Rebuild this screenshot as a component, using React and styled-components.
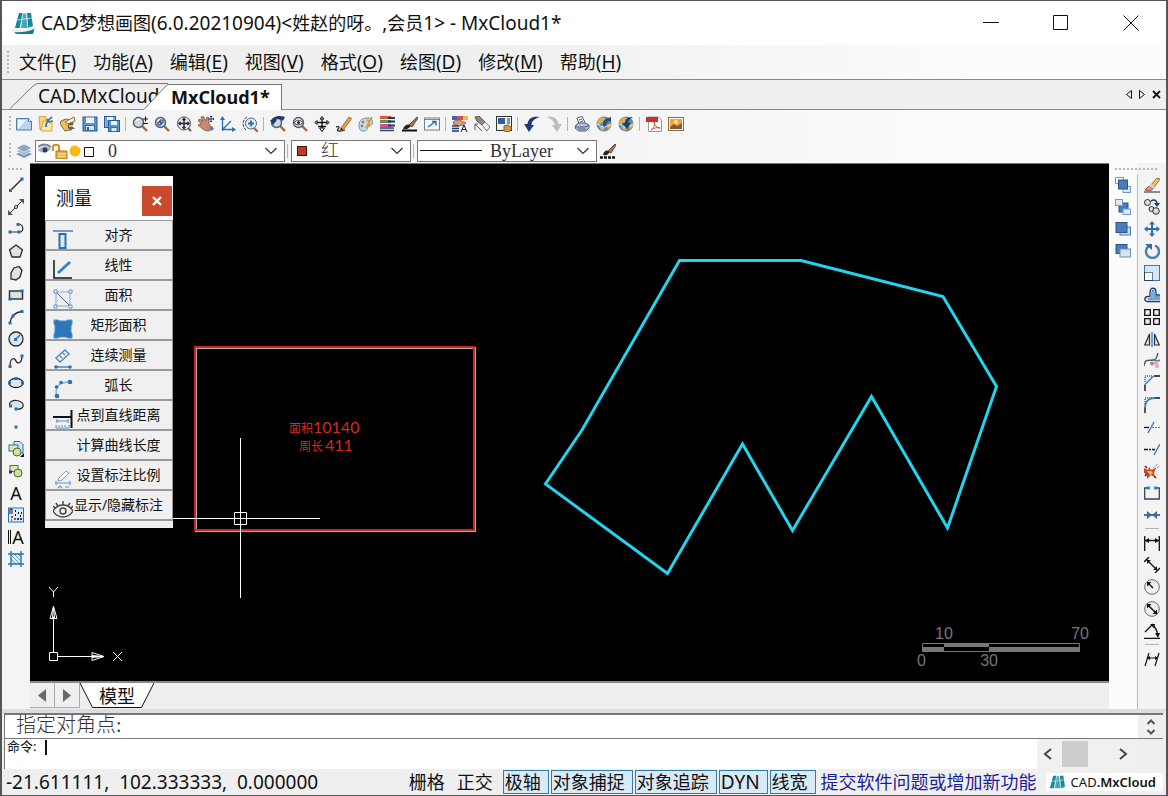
import React, { useState } from "react";
import styled, { createGlobalStyle, css } from "styled-components";

const menus = [
  ["文件", "F"],
  ["功能", "A"],
  ["编辑", "E"],
  ["视图", "V"],
  ["格式", "O"],
  ["绘图", "D"],
  ["修改", "M"],
  ["帮助", "H"],
];

const mainTools = [
  "new", "open", "openCloud", "save", "saveAll", "|",
  "zoomScale", "zoomWindow", "zoomExtents", "pan", "ucs", "zoomIn", "|",
  "zoomPrev", "zoomEye", "anchor", "pencil", "palette", "layers", "brush", "window", "|",
  "textStyle", "match", "properties", "|",
  "undo", "redo", "|",
  "print", "web", "webBack", "|",
  "pdf", "image",
];

const drawTools = [
  "line", "xline", "pline", "pentagon", "polygon", "rect", "arc", "circle", "spline",
  "ellipse", "ellipseArc", "point", "insertBlock", "block", "text", "pattern", "mtext", "hatch",
];

const orderTools = ["orderFront", "orderMiddle", "orderAbove", "orderBelow"];

const modifyTools = [
  "erase", "copy", "move", "rotate", "scale", "offset", "array", "mirror", "splineEdit",
  "chamfer", "fillet", "trim", "extend", "explode", "break", "join", "|",
  "dimLinear", "dimAligned", "dimRadius", "dimDiameter", "dimAngle", "|", "dimEdit",
];

const measures = [
  ["mAlign", "对齐"],
  ["mLinear", "线性"],
  ["mArea", "面积"],
  ["mRectArea", "矩形面积"],
  ["mContinue", "连续测量"],
  ["mArc", "弧长"],
  ["mPoint", "点到直线距离"],
  [null, "计算曲线长度"],
  ["mScale", "设置标注比例"],
  ["mEye", "显示/隐藏标注"],
];

const modes = [
  ["栅格", false],
  ["正交", false],
  ["极轴", true],
  ["对象捕捉", true],
  ["对象追踪", true],
  ["DYN", true],
  ["线宽", true],
];

const blue = "#2a6fb0";
const navy = "#1d3c74";
const ink = "#2b2b2b";

const dots = (points, fill = blue) =>
  points.map(([x, y]) => <rect key={`${x}-${y}`} x={x - 1.5} y={y - 1.5} width="3" height="3" fill={fill} />);

const lens = (
  <>
    <path d="M10 10l5 5" stroke="#a8643c" strokeWidth="2.4" />
    <circle cx="6.5" cy="6.5" r="5" fill="#cfd8df" stroke="#4d5f6c" strokeWidth="1.4" />
    <path d="M4 5c1-2 3-2 4-1" stroke="#fff" strokeWidth="1.2" />
  </>
);

const globe = (
  <>
    <circle cx="8" cy="8" r="7.5" fill="#4f8db8" />
    <path d="M2 4l4-3 4 2-3 3-4 3-2-1zM3 11l4-1 2 3-3 2zM11 9l4-2v3l-3 4z" fill="#d9b04b" />
    <path d="M1 8c3 1 4 3 7 3s4-2 7-2" fill="none" stroke="#dcecf4" />
  </>
);

const icons = {
  new: (
    <>
      <path d="M.5 2.5h12l3 3v8.500h-15z" fill="#b9d4ee" stroke="#4c7db0" />
      <path d="M2 4h8l-7 8H2z" fill="#eef6fd" />
      <path d="M12.5 2.5v3h3" fill="#fff" stroke="#4c7db0" />
    </>
  ),
  open: (
    <>
      <path d="M1 .5h7v14l-6-1z" fill="#f6d37c" stroke="#d5a443" />
      <path d="M5 5h9v10H3z" fill="#fbe6a6" stroke="#d8aa4a" />
      <path d="M8 11c0-4 1-7 5-9l1-1M9 3l2 3 4-1" stroke="#3d79a8" strokeWidth="1.8" />
    </>
  ),
  openCloud: (
    <>
      <path d="M1 5l5-2 7 2-3 9-5 1-5-7z" fill="#f0bd59" stroke="#8e6c34" />
      <path d="M5 6l9-5 1 4-7 3z" fill="#fff3d1" stroke="#916b3a" />
      <path d="M14 7c-4-1-7 1-6 5l3 3 1-2h3l-3-3z" fill="#55616a" />
      <path d="M9 10h4" stroke="#fbd481" strokeWidth="1.5" />
    </>
  ),
  save: (
    <>
      <rect x="1" y="1" width="14" height="14" fill="#5a94cb" stroke="#2c5d94" />
      <rect x="4" y="1.5" width="8" height="5.5" fill="#eaf3fb" />
      <rect x="3.5" y="9.5" width="9" height="5" fill="#d9e8f5" stroke="#376da5" />
      <rect x="5" y="11" width="2" height="3" fill="#2b5e96" />
    </>
  ),
  saveAll: (
    <>
      <rect x=".5" y=".5" width="11" height="11" fill="#7aabd6" stroke="#2c5d94" />
      <rect x="3" y="1" width="6" height="3" fill="#eaf3fb" />
      <rect x="4.5" y="4.5" width="11" height="11" fill="#5a94cb" stroke="#2c5d94" />
      <rect x="7" y="5" width="6" height="4" fill="#eaf3fb" />
      <rect x="7" y="11.5" width="6" height="4" fill="#d9e8f5" stroke="#376da5" />
    </>
  ),
  zoomScale: (
    <>
      {lens}
      <path d="M11 3h5M13.5 .5v5M11 7.5h5" stroke="#111" />
    </>
  ),
  zoomWindow: (
    <>
      {lens}
      <path d="M4 6h3v3H4zM6 4h3v3H6z" fill="#b8dbf5" stroke={navy} />
    </>
  ),
  zoomExtents: (
    <>
      <path d="M11 11l4 4" stroke="#81512f" strokeWidth="2" />
      <circle cx="8" cy="7.5" r="6.5" fill="#e4e9ed" stroke="#43515e" />
      <path
        d="M8 2.5v10M3 7.500h10M6.500 4L8 2.500 9.500 4M6.500 11L8 12.500 9.500 11M4.500 6L3 7.500 4.500 9M11.500 6L13 7.500 11.500 9"
        stroke="#222"
        strokeWidth="1.3"
      />
    </>
  ),
  pan: (
    <>
      <path d="M0 4l2-1 3 3-2-5 2-1 3 5 1-4 2 1v6l3 4-3 3-5-1-6-5 3-1z" fill="#c98b70" stroke="#80503f" strokeWidth=".8" />
      <path d="M11 12l3-2 2 3-3 2z" fill="#517bb4" />
      <path d="M13 0v6M10 3h6M12 1l1-1 1 1M12 5l1 1 1-1M15 2l1 1-1 1" stroke={navy} />
    </>
  ),
  ucs: (
    <>
      <path d="M2.5 15V2M2.5 13.5H15M2.5 13.5L11 5" stroke={blue} strokeWidth="1.3" />
      <path d="M0 4l2.500-4L5 4zM12 11l4 2.500-4 2.500z" fill={blue} />
    </>
  ),
  zoomIn: (
    <>
      <path d="M12 12l4 4" stroke="#b06939" strokeWidth="2.4" />
      <path d="M5 1a8 8 0 0 0-1 13" stroke="#335" strokeDasharray="3 1" />
      <circle cx="9" cy="7.5" r="5.5" fill="#dcecf8" stroke="#486a86" />
      <path d="M9 4.5v6M6 7.500h6" stroke={blue} strokeWidth="1.8" />
    </>
  ),
  zoomPrev: (
    <>
      {lens}
      <path d="M4 7c0-4 6-5 9-2l2-4C10-1 3 0 1 5z" fill={navy} />
      <path d="M0 4h7l-4 5z" fill={navy} />
    </>
  ),
  zoomEye: (
    <>
      {lens}
      <path d="M2.5 6.500c2-3 6-3 8 0-2 3-6 3-8 0z" fill="#fff" stroke="#333" />
      <circle cx="6.5" cy="6.5" r="1.5" fill="#222" />
    </>
  ),
  anchor: (
    <>
      <path d="M8 1v14M1 6.500h14M4 10.500h8" stroke="#111" strokeWidth="1.300" />
      <path d="M8 .5L6 3h4zM8 15.500L5.500 12h5zM1 6.500l2-2v4zM15 6.500l-2-2v4z" stroke="#111" fill="#fff" />
    </>
  ),
  pencil: (
    <>
      <path d="M0 11c3-1 4 0 2 2s2 3 7 1" stroke="#34231b" strokeWidth="1.300" />
      <path d="M5 12l8-11 2.500 1.500L8 13l-3 1z" fill="#eaa04b" stroke="#9a5323" strokeWidth=".8" />
      <path d="M5 11.500L4 15l3-1.500z" fill="#34231b" />
    </>
  ),
  palette: (
    <>
      <path d="M1 9c0-5 4-7 9-7 4 0 5 3 4 6-1 2-3 1-4 3s-1 4-5 4c-3 0-4-3-4-6z" fill="#c7dced" stroke="#678eb0" />
      <circle cx="5" cy="6" r="1.3" fill="#db4e43" />
      <circle cx="9" cy="4.5" r="1.3" fill="#f0b43d" />
      <circle cx="4" cy="10" r="1.3" fill="#4b9b52" />
      <path d="M8 12l6-11M11 11V4" stroke="#e39535" strokeWidth="1.6" />
    </>
  ),
  layers: (
    <>
      <rect x="0" y="0" width="11" height="3" fill="#e7523f" />
      <rect x="0" y="4" width="11" height="3" fill="#4b9c51" />
      <rect x="0" y="8" width="11" height="3" fill="#d948a1" />
      <path d="M0 12h14M0 14.500h14" stroke="#30465f" strokeWidth="1.4" />
      <path d="M8 2h7M8 5.500h7M8 9.500h7" stroke="#243a66" strokeWidth="1.8" />
    </>
  ),
  brush: (
    <>
      <path d="M0 14.500h15" stroke="#111" strokeWidth="2" />
      <path d="M1 13c2-5 5-5 8-4-1 3-4 5-8 4z" fill="#222" />
      <path d="M7 9l8-8 1 1-6 9z" fill="#a37656" stroke="#4b3123" strokeWidth=".8" />
    </>
  ),
  brushLine: (
    <>
      <path d="M0 14.500h16" stroke="#111" strokeWidth="2.400" strokeDasharray="3 1" />
      <path d="M3 12c1-5 4-5 7-4-1 3-3 5-7 4z" fill="#222" />
      <path d="M8 8l7-7 1 1-5 8z" fill="#a37656" stroke="#4b3123" strokeWidth=".8" />
    </>
  ),
  window: (
    <>
      <rect x=".5" y="2" width="15" height="12" fill="#f5f9fc" stroke="#6d8193" />
      <path d="M1 3.500h14" stroke="#6b8fb0" />
      <path d="M4 11l7-5M8 5.500h4v4" stroke={blue} strokeWidth="1.4" />
    </>
  ),
  textStyle: (
    <>
      <path d="M0 0h5v4H0z" fill="#3c66b5" />
      <path d="M5 0h6v4H5z" fill="#e0493c" />
      <path d="M11 0h5v4h-5z" fill="#f1b63a" />
      <path d="M2 5l5-1 7 3-3 2-4 1-6-2z" fill="#d69a79" stroke="#7a4c38" strokeWidth=".7" />
      <path d="M0 10h7M0 12.500h7M0 15h7" stroke="#243a66" strokeWidth="1.3" />
      <path d="M9 16l3-7 3 7M10 13.500h4" stroke="#222" />
    </>
  ),
  match: (
    <>
      <path d="M1 1l4-1 6 6-3 3-5-4z" fill="#9a8476" stroke="#555" />
      <path d="M8 9l3-3 5 5-3 4z" fill="#eceff2" stroke="#778" />
      <path d="M1 14V8M1 8l7 7M1 8h3" stroke="#4d6174" />
    </>
  ),
  properties: (
    <>
      <rect x=".5" y=".5" width="15" height="14" fill="#eef3f8" stroke="#333" />
      <rect x="2" y="2" width="7" height="6" fill="#2f5f97" />
      <path d="M11 3h3M11 5h3M11 7h3" stroke="#333" />
      <path d="M8 10l4-1 4 3-3 4-5-1z" fill="#dd9645" stroke="#8f5826" />
    </>
  ),
  undo: <path d="M15.5 1c-7-1-11 1-12 7H0l5 8 5-7H7.500c0-4 3-6 8-8z" fill={navy} />,
  redo: <path d="M.5 1c7-1 11 1 12 7H16l-5 8-5-7h2.500c0-4-3-6-8-8z" fill="#bdbdbd" />,
  print: (
    <>
      <path d="M5 8L3 2l5-1.500 3 6" fill="#fff" stroke="#485b78" />
      <path d="M5 4l3-1M6 6l3-1" stroke="#485b78" />
      <path d="M2 9l3-2h6l4 2v3l-3 3H5l-4-3z" fill="#b9c6da" stroke="#485b78" />
      <path d="M2 11h9l3-1M4 13h8" stroke="#485b78" />
    </>
  ),
  web: (
    <>
      {globe}
      <path d="M7 8c0-4 3-6 8-7v5l-2-1c-3 1-2 5-5 6z" fill="#314d73" />
    </>
  ),
  webBack: (
    <>
      {globe}
      <path d="M15 1c-5 0-8 2-8 6H4l5 6 4-6h-3c0-3 2-4 5-6z" fill={navy} />
    </>
  ),
  pdf: (
    <>
      <path d="M2.5 1h10l3 3v11.500h-13z" fill="#fff" stroke="#999" />
      <rect x="0" y="1" width="12" height="5" fill="#c92f2b" />
      <path d="M5 14c3-2 4-5 3-8 1 4 3 6 6 6-3-1-6 0-9 2z" stroke="#d44b40" />
    </>
  ),
  image: (
    <>
      <rect x=".5" y="1.5" width="15" height="13" fill="#fff" stroke="#8a6a4d" />
      <rect x="2" y="3" width="12" height="10" fill="#f0a63f" />
      <path d="M2 11l4-3 3 2 5-3v6H2z" fill="#8b5a3b" />
      <circle cx="8" cy="6" r="2" fill="#fbe57c" />
    </>
  ),
  stack: (
    <>
      <path d="M0 11l8-3 8 3-8 4z" fill="#7795b5" />
      <path d="M0 8l8-3 8 3-8 4z" fill="#9db7d0" stroke="#fff" strokeWidth=".6" />
      <path d="M0 5l8-4 8 4-8 4z" fill="#87a5c2" stroke="#fff" strokeWidth=".6" />
    </>
  ),
  line: (
    <>
      <path d="M2.5 13.500l11-11" stroke={ink} strokeWidth="1.4" />
      {dots([[2.5, 13.5], [14, 2]])}
    </>
  ),
  xline: (
    <>
      <path d="M1 15L15 1" stroke={ink} />
      <path d="M0 16v-5l5 5zM16 0v5l-5-5z" fill="#555" />
      <circle cx="8" cy="8" r="1.5" fill="#fff" stroke={ink} />
    </>
  ),
  pline: (
    <>
      <path d="M2 11h10M10 3c6 0 6 8 2 8" stroke={ink} strokeWidth="1.2" />
      {dots([[2, 11], [11, 11], [10, 3.5]])}
    </>
  ),
  pentagon: <path d="M8 2l6.500 5-2.500 7H4L1.500 7z" fill="#dde2e6" stroke={ink} strokeWidth="1.3" />,
  polygon: <path d="M6 3l5-1.500 3 4-2 6.500-4 3-5-1 0-6z" fill="#dfe3e6" stroke={ink} strokeWidth="1.3" />,
  rect: (
    <>
      <rect x="1.5" y="4" width="13" height="8" fill="#dde2e6" stroke={ink} strokeWidth="1.4" />
      {dots([[2, 12], [14, 4]])}
    </>
  ),
  arc: (
    <>
      <path d="M2 14C3 8 7 3 14 2.500" stroke={ink} strokeWidth="1.3" />
      {dots([[2, 14], [14, 2.5], [5, 7]])}
    </>
  ),
  circle: (
    <>
      <circle cx="8" cy="8" r="7" fill="#dce7ef" stroke={ink} strokeWidth="1.3" />
      <path d="M8 8l4-4" stroke={blue} strokeWidth="1.5" />
      {dots([[7.5, 8.5]])}
    </>
  ),
  spline: (
    <>
      <path d="M2 14C2 3 7 5 8 8s6 3 6-5" stroke={ink} strokeWidth="1.3" />
      {dots([[2, 13.5], [14, 3]])}
    </>
  ),
  ellipse: (
    <>
      <ellipse cx="8" cy="8" rx="7" ry="4.5" fill="#dce7ef" stroke={ink} strokeWidth="1.3" />
      {dots([[1.5, 8], [14.5, 8], [8, 3.5]])}
    </>
  ),
  ellipseArc: (
    <>
      <path d="M2 9C0 5 5 3 9 3.500s7 3 6 6-4 3-7 2.500" fill="#dce3e8" stroke={ink} strokeWidth="1.2" />
      {dots([[2.5, 9], [8, 12]])}
    </>
  ),
  point: dots([[8, 8]]),
  insertBlock: (
    <>
      <path d="M6 .5h6l3 3V12H6z" fill="#d4e5f5" stroke={blue} />
      <rect x="1" y="4" width="9" height="6" fill="#e9e9a5" stroke={blue} />
      <circle cx="9" cy="11" r="4" fill="#d4e08c" stroke="#3b6b50" />
      <path d="M16 12v4h-4z" fill="#111" />
    </>
  ),
  block: (
    <>
      <rect x="2" y="2.5" width="8" height="6" fill="#e9e9a5" stroke={blue} />
      <circle cx="10" cy="10" r="4" fill="#d4e08c" stroke="#3b6b50" />
      {dots([[2.5, 9]], navy)}
    </>
  ),
  pattern: (
    <>
      <rect x=".5" y="1" width="15" height="14" fill="#dcebf8" stroke={blue} />
      <path d="M7 4h1M10 6h1M13 6h1M7 8h1M12 9h1" stroke="#111" strokeWidth="2" />
      <path d="M3 10h2M6 12h2M3 13h1" stroke="#d63a31" strokeWidth="2" />
      <path d="M9 12h2M12 12h2" stroke={navy} strokeWidth="2" />
      <path d="M2 7V2h2v5" stroke="#111" />
    </>
  ),
  hatch: (
    <>
      <rect x="3" y="3" width="10" height="10" fill="#e8f1f8" />
      <path d="M3 8l5 5M3 4l9 9M6 3l7 7M10 3l3 3" stroke="#6b9bc4" />
      <path d="M3 0v16M13 0v16M0 3h16M0 13h16" stroke={blue} strokeWidth="1.4" />
    </>
  ),
  orderFront: (
    <>
      <rect x=".5" y=".5" width="8" height="6" fill="#fff" stroke="#6f9cc9" />
      <rect x="8" y="9.5" width="7.5" height="6" fill="#dceaf6" stroke="#6f9cc9" />
      <rect x="3.5" y="3" width="9" height="9" fill="#4a7cb8" stroke="#285590" />
    </>
  ),
  orderMiddle: (
    <>
      <rect x="4" y="4" width="9" height="9" fill="#4a7cb8" stroke="#285590" />
      <rect x=".5" y=".5" width="7" height="6" fill="#dceaf6" stroke="#6f9cc9" />
      <rect x="8" y="10" width="7.5" height="5.5" fill="#dceaf6" stroke="#6f9cc9" />
    </>
  ),
  orderAbove: (
    <>
      <rect x="5" y="6" width="10.5" height="8" fill="#c9def1" stroke="#4777ab" />
      <rect x="1" y="1.5" width="11" height="10" fill="#4a7cb8" stroke="#285590" />
    </>
  ),
  orderBelow: (
    <>
      <rect x="1" y="1.5" width="11" height="9" fill="#4a7cb8" stroke="#285590" />
      <rect x="5" y="6" width="10.5" height="8" fill="#d6e4f0" stroke="#6c8fb3" />
    </>
  ),
  erase: (
    <>
      <path d="M0 15h16" stroke="#222" />
      <path d="M6 9l7-8 3 1-7 10z" fill="#efc463" stroke="#7a5831" strokeWidth=".8" />
      <path d="M1 13l4-4 4 3-3 2z" fill="#ee8f7a" stroke="#7b4033" strokeWidth=".8" />
      <path d="M5 9l2-2 4 3-2 2z" fill="#c1d2e3" />
    </>
  ),
  copy: (
    <>
      <circle cx="3.5" cy="3.5" r="3" fill="#ddd" stroke={ink} />
      <circle cx="7.5" cy="10" r="2.5" fill="#ddd" stroke={ink} />
      <circle cx="12" cy="12" r="3.3" fill="#ddd" stroke={ink} />
      <path d="M7 2c3-2 6-1 6 3" stroke={navy} strokeWidth="1.6" />
      <path d="M10 4h6l-3 4z" fill={navy} />
    </>
  ),
  move: (
    <>
      <path d="M8 2v12M2 8h12" stroke={blue} strokeWidth="2" />
      <path
        d="M5 3.500L8 0l3 3.500zM5 12.500L8 16l3-3.500zM3.500 5L0 8l3.500 3zM12.500 5L16 8l-3.500 3z"
        fill={blue}
      />
    </>
  ),
  rotate: (
    <>
      <path d="M6 2.500A6.500 6.500 0 1 0 11 2.500" stroke="#4b7fae" strokeWidth="2.4" />
      <path d="M1 1h7v6z" fill="#3c6b98" />
    </>
  ),
  scale: (
    <>
      <rect x=".5" y=".5" width="15" height="15" fill="#d4e7f7" stroke="#3f74aa" />
      <rect x="1" y="8" width="7" height="7" fill="#f5faff" />
      <path d="M.5 7.500h8v8h-8z" stroke="#111" strokeDasharray="1 1" />
    </>
  ),
  offset: (
    <>
      <path d="M16 14.500H3c-3 0-3-5 1-5h2V5c0-5 6-5 6 0v3h4" stroke={navy} strokeWidth="1.3" />
      <path d="M16 12H4M8 12V5c0-2 2-2 2 0v5h6" stroke="#4189cd" strokeWidth="1.3" />
    </>
  ),
  array: (
    <path
      d="M.7.700h5.600v5.600H.7zM9.700.700h5.600v5.600H9.700zM.7 9.700h5.600v5.600H.7zM9.700 9.700h5.600v5.600H9.700z"
      fill="#eee"
      stroke="#111"
      strokeWidth="1.3"
    />
  ),
  mirror: (
    <>
      <path d="M5.5 3v11H.8zM10.500 3v11h4.700z" fill="#e5e5e5" stroke={ink} strokeWidth="1.2" />
      <path d="M8 1v15" stroke="#3c8ad4" strokeWidth="1.5" />
    </>
  ),
  splineEdit: (
    <>
      <path d="M0 13c1-8 5-5 9-6 4 0 4-4 5-7" stroke="#555" strokeWidth="1.4" />
      <path d="M9 7l5 1 2-1" stroke="#4b7fc4" strokeWidth="1.6" />
      <circle cx="8" cy="10.500" r="2" fill="#a879cc" />
      <circle cx="12" cy="10" r="2" fill="#e3b84b" />
      <circle cx="13" cy="13" r="2.2" fill="#e6aad0" />
    </>
  ),
  chamfer: (
    <>
      <path d="M1 7V1h8" stroke="#111" strokeDasharray="1 1" />
      <path d="M1 16V9.500M10 1h6" stroke="#111" strokeWidth="1.4" />
      <path d="M1 9.500L9.500 1" stroke="#3a7fc5" strokeWidth="1.4" />
    </>
  ),
  fillet: (
    <>
      <path d="M1 7V1h7" stroke="#111" strokeDasharray="1 1" />
      <path d="M1 16v-6M10 1h6" stroke="#111" strokeWidth="1.4" />
      <path d="M1 11C1 5 4 1 11 1" stroke="#3a7fc5" strokeWidth="1.8" />
    </>
  ),
  trim: (
    <>
      <path d="M0 8.500h5" stroke="#111" strokeWidth="1.3" />
      <path d="M8 8.500h8" stroke="#3a7fc5" strokeWidth="1.2" strokeDasharray="2 1" />
      <path d="M4 14l6-11" stroke="#3a7fc5" strokeWidth="1.5" />
    </>
  ),
  extend: (
    <>
      <path d="M0 8.500h4M5 8.500h2M8 8.500h3" stroke="#111" strokeWidth="1.3" />
      <path d="M10 14l6-11" stroke="#3a7fc5" strokeWidth="1.5" />
    </>
  ),
  explode: (
    <>
      <path d="M0 5l4 2 1-3 2 3 5-2-2 5 1 4-4-2-4 4 0-4-3-2z" fill="#c5472a" />
      <path d="M3 8l4 0 2 2-3 2z" fill="#f7c948" />
      <path d="M1 13l2-2M10 13l2 2M1 3l2 2" stroke="#6b241a" strokeWidth="1.6" />
      <path d="M9 5l5-4M11 6l5-3" stroke="#555" strokeDasharray="1 1" />
    </>
  ),
  break: (
    <>
      <path d="M3 3H.7v11h14.600V3H13" stroke="#37485c" strokeWidth="1.3" fill="#f2f5f7" />
      {dots([[4.5, 3], [11.5, 3]], "#2389cb")}
    </>
  ),
  join: (
    <>
      <path d="M0 8h16" stroke={navy} strokeWidth="1.5" />
      <path d="M3 4l5 4-5 4zM13 4L8 8l5 4z" fill="#3f6d9c" />
    </>
  ),
  dimLinear: (
    <>
      <path d="M.7 1v15M15.300 1v15M1 5.500h14" stroke="#111" strokeWidth="1.3" />
      <path d="M1 5.500l4-2.500v5zM15 5.500L11 3v5z" fill="#111" />
    </>
  ),
  dimAligned: (
    <>
      <path d="M0 5l5-5M11 16l5-5M3 3l10 10" stroke="#111" strokeWidth="1.4" />
      <path d="M3 3h4L3 7zM13 13H9l4-4z" fill="#111" />
    </>
  ),
  dimRadius: (
    <>
      <circle cx="8" cy="8" r="7.3" fill="#f1f1f1" stroke="#666" />
      <path d="M3.500 3.500L9 9" stroke="#111" strokeWidth="1.5" />
      <path d="M3 3h4.500L3 7.500z" fill="#111" />
    </>
  ),
  dimDiameter: (
    <>
      <circle cx="8" cy="8" r="7.3" fill="#f1f1f1" stroke="#666" />
      <path d="M3 3l10 10" stroke="#111" strokeWidth="1.5" />
      <path d="M3 3h4.500L3 7.500zM13 13H8.500L13 8.500z" fill="#111" />
    </>
  ),
  dimAngle: (
    <>
      <path d="M0 15.500h16M1 9l8-8M7 2c4 1 6 4 7 11" stroke="#111" strokeWidth="1.3" />
      <path d="M11 10h5l-2 5zM6 1h5l-1 4z" fill="#111" />
    </>
  ),
  dimEdit: (
    <>
      <path d="M1 15L5 2M11 15l4-13M4 7h9" stroke="#111" strokeWidth="1.2" />
      <path d="M3 7l3-2v4zM14 7l-3-2v4z" fill="#111" />
    </>
  ),
  mAlign: (
    <>
      <path d="M0 2h20" stroke="#6e9ac8" strokeWidth="2" />
      <rect x="6.5" y="5" width="6" height="14" fill="#dceaf6" stroke="#2473b8" strokeWidth="2" />
    </>
  ),
  mLinear: (
    <>
      <path d="M1 1v18h18" stroke="#111" strokeWidth="1.5" />
      <path d="M5 14L17 3" stroke="#3a82c8" strokeWidth="3" />
    </>
  ),
  mArea: (
    <>
      <path d="M3 3h14v14H3z" stroke="#86acd0" />
      <path d="M3 3l14 14" stroke="#556c86" />
      <path d="M1 1h3v3H1zM16 1h3v3h-3zM1 16h3v3H1zM16 16h3v3h-3z" stroke="#5d8fc0" fill="#fff" />
    </>
  ),
  mRectArea: (
    <path
      d="M1 1h4l2 1h6l2-1h4v4l-1 2v6l1 2v4h-4l-2-1H7l-2 1H1v-4l1-2V7L1 5z"
      fill="#2d76b8"
      stroke="#4d94d1"
    />
  ),
  mContinue: (
    <>
      <path d="M3 9l9-8 4 4-9 8z" stroke="#4b87bf" fill="#eff5fa" strokeWidth="1.4" />
      <path d="M7 7l2 2M10 4l2 2M3 18h14" stroke="#4b87bf" strokeWidth="1.5" />
      <circle cx="3" cy="18" r="1.8" fill={blue} />
      <circle cx="17" cy="18" r="1.8" fill={blue} />
    </>
  ),
  mArc: (
    <>
      <path d="M4 17C1 9 6 3 16 3" stroke="#8db1d3" strokeWidth="1.5" />
      <circle cx="4" cy="17" r="2.3" fill="#2473b8" />
      <circle cx="3.5" cy="8" r="1.8" fill="#2473b8" />
      <circle cx="8" cy="3.5" r="1.8" fill="#2473b8" />
      <circle cx="17" cy="3" r="2.3" fill="#2473b8" />
    </>
  ),
  mPoint: (
    <>
      <path d="M0 8h18M18.500 1v18" stroke="#111" strokeWidth="2" />
      <path d="M3 12h13M3 16v3h13v-3M6 16v2M9 16v2M12 16v2M4 10v4M15 10v4" stroke="#5b90c5" />
    </>
  ),
  mScale: (
    <>
      <path d="M6 9l7-7 3 2-7 7-4 1z" stroke="#7d9cba" fill="#fff" />
      <path d="M3 14h14M3 12v4M17 12v4M5 19l2-2 2 2M12 18h4" stroke="#6695c4" strokeWidth="1.2" />
    </>
  ),
  mEye: (
    <>
      <path d="M0 12c5-8 15-8 20 0-5 8-15 8-20 0z" stroke="#444" strokeWidth="1.4" />
      <circle cx="10" cy="12" r="3" stroke="#444" strokeWidth="1.4" />
      <path d="M10 6V2M5 7L3 4M15 7l2-3M2 9L0 7M18 9l2-2" stroke="#444" strokeWidth="1.4" />
    </>
  ),
};

const Icon = ({ name, size = 16 }) => (
  <svg width={size} height={size} viewBox={`0 0 ${size} ${size}`} fill="none" aria-hidden="true">
    {icons[name]}
  </svg>
);

const Logo = ({ size, hull }) => (
  <svg width={size} height={size} viewBox={hull ? "0 0 24 24" : "2 1 19 17"} aria-hidden="true">
    <path d="M7 2h4L8 17H3zM15 2h4l2 13-5 2z" fill="#178a99" />
    <path d="M11 3l3-1 2 15H9z" fill="#45a9b4" />
    <path d="M5 9l15-2M11 2L8 17M14 2l2 15" stroke="#d8eef0" strokeWidth=".7" />
    {hull && <path d="M1 20c8 1 16 0 22-4l-2 7H4z" fill="#147a90" />}
    {hull && <path d="M0 18c9 1 17 0 24-3v2c-7 4-16 5-24 4z" fill="#e3f3f4" />}
  </svg>
);

const Tools = ({ names }) =>
  names.map((name, i) => {
    if (name === "|") return <Separator key={i} />;
    return (
      <ToolButton key={i} type="button" aria-label={name}>
        {name === "text" && <Letter>A</Letter>}
        {name === "mtext" && <Letter $bars>A</Letter>}
        {icons[name] && <Icon name={name} />}
      </ToolButton>
    );
  });

const Chevron = () => (
  <svg width="12" height="8" viewBox="0 0 12 8" fill="none" aria-hidden="true">
    <path d="M.5 1L6 6.500 11.500 1" stroke="#333" strokeWidth="1.2" />
  </svg>
);

const TabEdge = ({ active }) => {
  const slope = active ? "M0 25.500L20 4q3-3.500 4-3.500" : "M0 25.500L23 3q3-2.500 5-2.500";
  return (
    <svg width={active ? 24 : 28} height="26" aria-hidden="true">
      <path d={`${slope}V26H0`} fill={active ? "#fff" : "#efefef"} />
      <path d={slope} stroke="#777" fill="none" />
    </svg>
  );
};

function Drawing() {
  return (
    <DrawingSvg aria-label="绘图区">
      <g fill="none">
        <rect x="166" y="184" width="279" height="183" stroke="#b9a9a4" strokeWidth="2" />
        <rect x="165" y="183" width="279" height="183" stroke="#c4291f" strokeWidth="2" />
        <path
          d="M649.500 96.500H771L913 132.500 966.500 222.500 917.500 364 841.500 232.500 762.500 366.500 712.500 280 637.500 409.500 515.500 320 552 266z"
          stroke="#22d5ee"
          strokeWidth="3"
        />
        <path d="M130 354.500H290M210.500 274V434M204.500 348.500h12v12h-12z" stroke="#fff" />
      </g>
      <DrawingText x="259" y="269">
        <tspan>面积</tspan>
        <Digits>10140</Digits>
      </DrawingText>
      <DrawingText x="269" y="287">
        <tspan>周长</tspan>
        <Digits dx="2">411</Digits>
      </DrawingText>
    </DrawingSvg>
  );
}

function MeasurePanel() {
  const [open, setOpen] = useState(true);
  if (!open) return null;
  return (
    <Panel>
      <PanelHeader>
        <PanelTitle>测量</PanelTitle>
        <PanelClose type="button" aria-label="关闭" onClick={() => setOpen(false)}>
          <svg width="10" height="10" viewBox="0 0 10 10" aria-hidden="true">
            <path d="M1 1l8 8M9 1L1 9" stroke="#fff" strokeWidth="2.4" />
          </svg>
        </PanelClose>
      </PanelHeader>
      {measures.map(([icon, label]) => (
        <MeasureButton key={label} type="button">
          <MeasureIcon>{icon && <Icon name={icon} size={20} />}</MeasureIcon>
          <MeasureLabel>{label}</MeasureLabel>
        </MeasureButton>
      ))}
    </Panel>
  );
}

function App() {
  const [command, setCommand] = useState("");

  return (
    <>
      <GlobalStyle />
      <Window>
        <TitleBar>
          <Logo size={24} hull />
          <Title>
            CAD<Han>梦想画图</Han>(6.0.20210904)&lt;<Han>姓赵的呀。</Han>,<Han>会员</Han>1&gt; - MxCloud1*
          </Title>
          <WindowButton type="button" aria-label="最小化">
            <svg width="16" height="16"><path d="M0 7.500h16" stroke="#111" /></svg>
          </WindowButton>
          <WindowButton type="button" aria-label="最大化">
            <svg width="16" height="16"><path d="M.5.500h14v14H.5z" stroke="#111" fill="none" /></svg>
          </WindowButton>
          <WindowButton type="button" aria-label="关闭">
            <svg width="16" height="16"><path d="M.5.500l15 15M15.500.500l-15 15" stroke="#111" /></svg>
          </WindowButton>
        </TitleBar>

        <MenuBar>
          <Grip $length="22px" />
          {menus.map(([label, key]) => (
            <MenuItem key={key} type="button">
              <Han>{label}</Han>(<u>{key}</u>)
            </MenuItem>
          ))}
        </MenuBar>

        <DocTabs>
          <DocTab type="button">
            <TabEdge />
            <TabLabel $width="130px">CAD.MxCloud</TabLabel>
          </DocTab>
          <DocTab type="button" $active>
            <TabEdge active />
            <TabLabel $width="114px" $active>MxCloud1*</TabLabel>
          </DocTab>
          <TabArrows>
            <svg width="6" height="9"><path d="M5.500.500v8l-5-4z" fill="none" stroke="#111" /></svg>
            <svg width="6" height="9"><path d="M.5.500v8l5-4z" fill="none" stroke="#111" /></svg>
            <svg width="9" height="9"><path d="M1 1l7 7M8 1L1 8" stroke="#111" strokeWidth="1.8" /></svg>
          </TabArrows>
        </DocTabs>

        <ToolBar $height="28px">
          <Grip $length="16px" />
          <Tools names={mainTools} />
        </ToolBar>

        <ToolBar $height="25px">
          <Grip $length="16px" />
          <Tools names={["stack"]} />
          <Combo $width="250px">
            <svg width="60" height="16" viewBox="0 0 60 16" fill="none" aria-hidden="true">
              <path d="M0 7c4-5 10-5 13-1-3 4-10 5-13 1z" fill="#a9b5ca" />
              <path d="M0 4c4-3 9-3 13 0" stroke="#7b7f93" strokeWidth="2" />
              <circle cx="7" cy="7" r="2.5" fill="#2b3b5d" />
              <path d="M15 8V4c0-3 6-3 6 0v4" stroke="#d08a1f" strokeWidth="2" />
              <path d="M18 8h11v8H18z" fill="#e9b13d" stroke="#ad741c" />
              <path d="M20 11h8M20 13.500h8" stroke="#fbe6a0" />
              <circle cx="37" cy="8" r="5.5" fill="#fdb913" />
              <path d="M46.500 4.500h9v9h-9z" stroke="#111" fill="#fff" />
            </svg>
            <Select aria-label="图层" $indent="10px">
              <option>0</option>
            </Select>
            <Chevron />
          </Combo>
          <Separator />
          <Combo $width="120px">
            <Swatch />
            <Select aria-label="颜色" $indent="12px" $light>
              <option>红</option>
            </Select>
            <Chevron />
          </Combo>
          <Separator />
          <Combo $width="180px">
            <LineSample />
            <Select aria-label="线型" $indent="8px">
              <option>ByLayer</option>
            </Select>
            <Chevron />
          </Combo>
          <Tools names={["brushLine"]} />
        </ToolBar>

        <Workspace>
          <SideBar>
            <DotRow />
            <Tools names={drawTools} />
          </SideBar>
          <Center>
            <Canvas>
              <Drawing />
              <MeasurePanel />
              <UcsIcon viewBox="0 0 80 80" width="80" height="80" aria-label="UCS">
                <g stroke="#fff" fill="none">
                  <path d="M5.500 66.500v-36M9.500 70.500h46M1.500 66.500h8v8h-8z" />
                  <path d="M2 32.500l3.500-12 3.500 12zM4.500 32l1-12 1 12M44 66.500l12 4-12 4zM44 69.500l12 1-12 1" />
                  <path d="M1 1l4.500 5v5M10 1L5.500 6M65 66l9 9M74 66l-9 9" />
                </g>
              </UcsIcon>
              <ScaleBar>
                <ScaleRow>
                  <span>10</span>
                  <span>70</span>
                </ScaleRow>
                <svg width="158" height="9" aria-hidden="true">
                  <path d="M.5.500h157v8H.5z" fill="#000" stroke="#777" />
                  <path d="M0 4h22v5H0zM22 0h45v4H22zM67 4h91v5H67z" fill="#777" />
                </svg>
                <ScaleRow $below>
                  <span>0</span>
                  <span>30</span>
                </ScaleRow>
              </ScaleBar>
            </Canvas>
            <ModelTabs>
              <NavButton type="button" aria-label="上一个">
                <svg width="8" height="13"><path d="M8 0v13L0 6.500z" fill="#6a6a6a" /></svg>
              </NavButton>
              <NavButton type="button" aria-label="下一个">
                <svg width="8" height="13"><path d="M0 0v13l8-6.500z" fill="#6a6a6a" /></svg>
              </NavButton>
              <ModelTab type="button">
                <svg width="74" height="25" aria-hidden="true">
                  <path d="M0 0l12.500 24.500h49L74 0" fill="#fff" stroke="#111" />
                </svg>
                <span>模型</span>
              </ModelTab>
            </ModelTabs>
          </Center>
          <RightDock>
            <DotRow $wide />
            <RightColumns>
              <RightColumn>
                <Tools names={orderTools} />
              </RightColumn>
              <RightColumn $divided>
                <Tools names={modifyTools} />
              </RightColumn>
            </RightColumns>
          </RightDock>
        </Workspace>

        <CommandArea>
          <CommandOutput>
            <OutputText>指定对角点:</OutputText>
            <Spinner>
              <svg width="8" height="16" fill="none" aria-hidden="true">
                <path d="M.5 5L4 1.500 7.500 5M.5 11L4 14.500 7.500 11" stroke="#555" strokeWidth="2" />
              </svg>
            </Spinner>
          </CommandOutput>
          <CommandLine>
            <CommandLabel htmlFor="command">命令:</CommandLabel>
            <Caret />
            <CommandInput id="command" value={command} onChange={(e) => setCommand(e.target.value)} />
            <ScrollBar>
              <svg width="9" height="12" fill="none"><path d="M8 1L2 6l6 5" stroke="#444" strokeWidth="2" /></svg>
              <ScrollThumb />
              <svg width="9" height="12" fill="none"><path d="M1 1l6 5-6 5" stroke="#444" strokeWidth="2" /></svg>
            </ScrollBar>
            <Corner />
          </CommandLine>
        </CommandArea>

        <StatusBar>
          <Coordinates>-21.611111,&nbsp; 102.333333,&nbsp; 0.000000</Coordinates>
          {modes.map(([label, on]) => (
            <StatusButton key={label} type="button" $on={on} aria-pressed={on}>
              {label === "DYN" ? label : <Han>{label}</Han>}
            </StatusButton>
          ))}
          <Feedback href="#feedback">提交软件问题或增加新功能</Feedback>
          <Brand>
            <Logo size={16} />
            CAD<b>.MxCloud</b>
          </Brand>
        </StatusBar>
      </Window>
    </>
  );
}

const GlobalStyle = createGlobalStyle`
  * {
    box-sizing: border-box;
  }
  body {
    margin: 0;
    background: #efefef;
    color: #111;
    font-family: "Noto Sans", "Noto Sans CJK SC", sans-serif;
    font-size: 18px;
  }
  button, input, select {
    margin: 0;
    padding: 0;
    border: 0;
    border-radius: 0;
    background: none;
    color: inherit;
    font: inherit;
    outline: none;
  }
  svg {
    display: block;
    flex: none;
  }
`;

const Window = styled.div`
  display: flex;
  flex-direction: column;
  height: 100vh;
  min-height: 720px;
  border: 1px solid #555;
  border-width: 1px 2px;
  white-space: nowrap;
`;

// Chinese labels run one size smaller than the Latin text beside them
const Han = styled.span`
  font-size: 18px;
`;

const TitleBar = styled.header`
  display: flex;
  align-items: center;
  height: 44px;
  padding-left: 10px;
  background: #fff;
`;

const Title = styled.h1`
  flex: 1;
  margin: 0 0 0 5px;
  font-size: 19px;
  font-weight: 400;
  line-height: 24px;
`;

const WindowButton = styled.button`
  display: flex;
  align-items: center;
  justify-content: center;
  width: 70px;
  height: 44px;
`;

const MenuBar = styled.nav`
  display: flex;
  align-items: center;
  gap: 2px;
  height: 34px;
  padding-left: 5px;
  background: linear-gradient(90deg, #efefef 40%, #fcfcfc 85%);
`;

const Grip = styled.i`
  width: 2px;
  height: ${({ $length }) => $length};
  margin-right: 2px;
  background: repeating-linear-gradient(#b8b8b8 0 2px, transparent 2px 4px);
`;

const MenuItem = styled.button`
  padding: 0 8px 0 6px;
  font-size: 19px;
  line-height: 24px;
  u {
    text-underline-offset: 2px;
  }
  & + & {
    padding-left: 7px;
  }
`;

const DocTabs = styled.div`
  display: flex;
  align-items: flex-end;
  height: 31px;
  padding-left: 8px;
  border-top: 1px solid #888;
  border-bottom: 1px solid #888;
  background: #efefef;
`;

const DocTab = styled.button`
  display: flex;
  height: 26px;
  ${({ $active }) =>
    $active &&
    css`
      z-index: 1;
      margin-left: -24px;
      margin-bottom: -1px;
    `}
`;

const TabLabel = styled.span`
  width: ${({ $width }) => $width};
  height: 26px;
  overflow: hidden;
  border-top: 1px solid #777;
  font-size: 19px;
  line-height: 24px;
  text-align: left;
  ${({ $active }) =>
    $active &&
    css`
      padding-left: 3px;
      border-right: 1px solid #777;
      background: #fff;
      font-size: 18px;
      font-weight: 700;
    `}
`;

const TabArrows = styled.div`
  display: flex;
  gap: 7px;
  align-self: center;
  margin-left: auto;
  padding-right: 5px;
`;

const ToolBar = styled.div`
  display: flex;
  align-items: center;
  height: ${({ $height }) => $height};
  padding-left: 7px;
  background: linear-gradient(90deg, #f4f4f4 50%, #fcfcfc 85%);
`;

const Separator = styled.i`
  flex: none;
  align-self: center;
  width: 1px;
  height: 14px;
  margin: 0 3px 0 2px;
  background: #b5b5b5;
`;

const ToolButton = styled.button`
  display: flex;
  flex: none;
  align-items: center;
  justify-content: center;
  width: 22px;
  height: 22px;
  &:hover {
    background: #dbeaf7;
  }
`;

const Letter = styled.span`
  font-size: 18px;
  line-height: 18px;
  ${({ $bars }) =>
    $bars &&
    css`
      padding-left: 1px;
      border-left: 3px double #111;
      line-height: 14px;
    `}
`;

const Combo = styled.label`
  display: flex;
  align-items: center;
  width: ${({ $width }) => $width};
  height: 22px;
  padding: 0 7px 0 2px;
  border: 1px solid #777;
  background: #fff;
`;

const Select = styled.select`
  flex: 1;
  min-width: 0;
  height: 20px;
  padding-left: ${({ $indent }) => $indent};
  appearance: none;
  color: #333;
  font-family: "Liberation Serif", "Noto Sans CJK SC", serif;
  font-size: 18px;
  font-weight: ${({ $light }) => ($light ? 300 : 400)};
  line-height: 20px;
`;

const Swatch = styled.i`
  width: 10px;
  height: 10px;
  margin: 0 2px 0 3px;
  border: 1px solid #3c1712;
  background: #bf3a2b;
`;

const LineSample = styled.i`
  width: 62px;
  height: 1px;
  background: #111;
`;

const Workspace = styled.main`
  display: flex;
  flex: 1;
  min-height: 0;
  background: #f4f4f4;
`;

const SideBar = styled.aside`
  display: flex;
  flex-direction: column;
  align-items: center;
  width: 28px;
  padding-top: 5px;
`;

const DotRow = styled.i`
  width: ${({ $wide }) => ($wide ? "42px" : "16px")};
  height: 2px;
  margin: 0 0 4px ${({ $wide }) => ($wide ? "6px" : "0")};
  background: repeating-linear-gradient(90deg, #b8b8b8 0 2px, transparent 2px 4px);
`;

const Center = styled.div`
  display: flex;
  flex: 1;
  flex-direction: column;
  min-width: 0;
`;

const Canvas = styled.section`
  position: relative;
  flex: 1;
  overflow: hidden;
  border-top: 1px solid #777;
  background: #000;
`;

const DrawingSvg = styled.svg`
  position: absolute;
  inset: 0;
  width: 100%;
  height: 100%;
`;

const DrawingText = styled.text`
  fill: #d8281e;
  font-family: "Noto Sans CJK SC", sans-serif;
  font-size: 12px;
`;

const Digits = styled.tspan`
  font-family: Lato, sans-serif;
  font-size: 16px;
`;

const Panel = styled.div`
  position: absolute;
  top: 12px;
  left: 15px;
  display: flex;
  flex-direction: column;
  width: 128px;
  padding-bottom: 7px;
  background: #f0f0f0;
`;

const PanelHeader = styled.div`
  display: flex;
  align-items: center;
  justify-content: space-between;
  height: 45px;
  padding: 6px 1px 0 11px;
  border-bottom: 1px solid #999;
  background: #fff;
`;

const PanelTitle = styled.h2`
  margin: 0 0 6px;
  font-size: 18px;
  font-weight: 400;
  line-height: 24px;
`;

const PanelClose = styled.button`
  display: flex;
  align-items: center;
  justify-content: center;
  width: 30px;
  height: 30px;
  background: #c94a2c;
`;

const MeasureButton = styled.button`
  display: flex;
  align-items: center;
  height: 30px;
  padding: 0 8px 0 7px;
  border: solid #999;
  border-width: 0 1px 2px 1px;
  font-size: 14px;
  line-height: 20px;
`;

const MeasureIcon = styled.span`
  align-self: flex-end;
  width: 20px;
`;

const MeasureLabel = styled.span`
  flex: 1;
  text-align: center;
`;

const UcsIcon = styled.svg`
  position: absolute;
  bottom: 15px;
  left: 18px;
`;

const ScaleBar = styled.div`
  position: absolute;
  right: 29px;
  bottom: 12px;
  color: #777;
  font-family: "Liberation Sans", sans-serif;
  font-size: 16px;
  line-height: 16px;
`;

const ScaleRow = styled.div`
  display: flex;
  justify-content: space-between;
  margin: ${({ $below }) => ($below ? "1px 82px 0 -5px" : "0 -9px 1px 13px")};
`;

const ModelTabs = styled.div`
  display: flex;
  height: 28px;
  border-top: 2px solid #888;
  background: #efefef;
`;

const NavButton = styled.button`
  display: flex;
  align-items: center;
  justify-content: center;
  width: 25px;
  height: 25px;
  border: solid #aaa;
  border-width: 0 1px 1px 0;
`;

const ModelTab = styled.button`
  display: grid;
  align-items: center;
  justify-items: center;
  height: 25px;
  line-height: 24px;
  & > * {
    grid-area: 1 / 1;
  }
`;

const RightDock = styled.aside`
  display: flex;
  flex-direction: column;
  width: 57px;
  padding-top: 5px;
  background: linear-gradient(90deg, #fcfcfc 50%, #f3f3f3 50%);
`;

const RightColumns = styled.div`
  display: flex;
  flex: 1;
`;

const RightColumn = styled.div`
  display: flex;
  flex-direction: column;
  align-items: center;
  width: 28px;
  ${({ $divided }) =>
    $divided &&
    css`
      border-left: 1px solid #bbb;
      ${Separator} {
        width: 14px;
        height: 1px;
        margin: 2px 0 3px;
      }
    `}
`;

const CommandArea = styled.section`
  padding: 0 3px 0 2px;
  border-top: 4px solid #ddd;
`;

const CommandOutput = styled.div`
  display: flex;
  height: 26px;
  border: solid #777;
  border-width: 2px 0 1px 1px;
  background: #fff;
`;

const OutputText = styled.output`
  flex: 1;
  padding-left: 11px;
  color: #333;
  font-family: "Liberation Serif", "Noto Sans CJK SC", serif;
  font-size: 20px;
  font-weight: 300;
  line-height: 20px;
`;

const Spinner = styled.div`
  display: flex;
  align-items: center;
  justify-content: center;
  width: 25px;
  background: #f0f0f0;
`;

const CommandLine = styled.div`
  display: flex;
  height: 30px;
  padding-left: 2px;
  border-left: 1px solid #777;
  background: #fff;
`;

const CommandLabel = styled.label`
  font-size: 13px;
  line-height: 14px;
`;

const Caret = styled.i`
  width: 2px;
  height: 15px;
  margin: 1px 0 0 9px;
  background: #111;
`;

const CommandInput = styled.input`
  flex: 1;
  height: 20px;
  font-size: 13px;
`;

const ScrollBar = styled.div`
  display: flex;
  align-items: center;
  justify-content: space-between;
  width: 101px;
  padding: 0 10px 0 6px;
  background: #f0f0f0;
`;

const ScrollThumb = styled.i`
  width: 26px;
  height: 26px;
  margin-right: 22px;
  background: #cdcdcd;
`;

const Corner = styled.i`
  width: 25px;
  background: #efefef;
`;

const StatusBar = styled.footer`
  display: flex;
  align-items: center;
  gap: 2px;
  height: 26px;
  padding: 0 3px 0 4px;
  background: #efefef;
`;

const Coordinates = styled.span`
  flex: 1;
  font-size: 19px;
  line-height: 24px;
`;

const StatusButton = styled.button`
  height: 24px;
  padding: 0 7px 0 1px;
  border: 1px solid ${({ $on }) => ($on ? "#2f79ad" : "transparent")};
  background: ${({ $on }) => ($on ? "#d9eaf7" : "transparent")};
  font-size: 19px;
  line-height: 22px;
`;

const Feedback = styled.a`
  margin: 0 7px 0 3px;
  color: #1c1c9c;
  line-height: 24px;
  text-decoration: none;
`;

const Brand = styled.span`
  display: flex;
  align-items: center;
  height: 18px;
  padding: 0 7px 0 3px;
  background: #fff;
  font-size: 13px;
  svg {
    margin-right: 6px;
  }
  b {
    font-weight: 600;
  }
`;

export default App;
